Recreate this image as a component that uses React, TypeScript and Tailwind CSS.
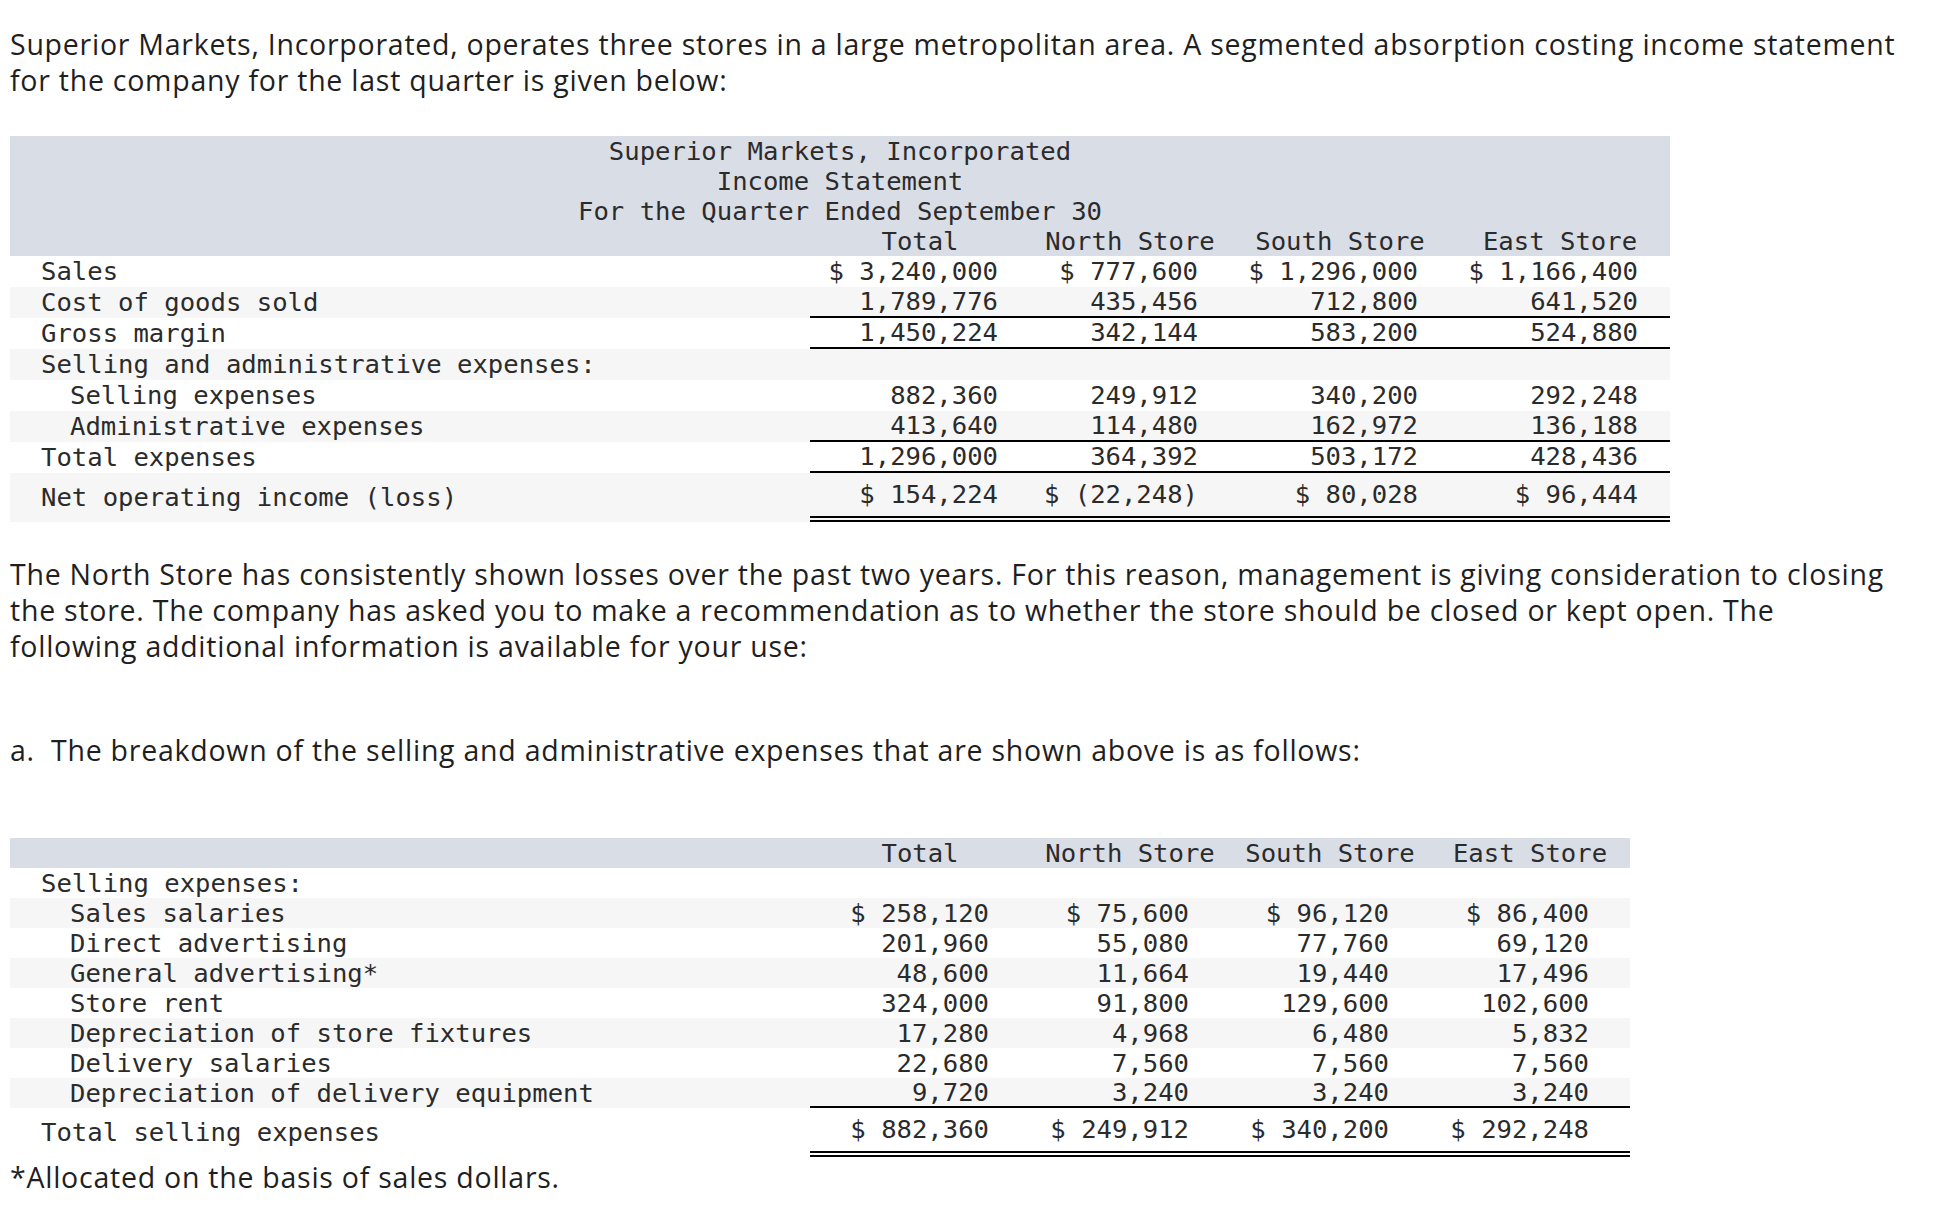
import { FunctionComponent } from 'react'

interface Row {
  label: string
  indent?: boolean
  vals: string[]
  line?: boolean
}

const topRows: Row[] = [
  { label: 'Sales', vals: ['$ 3,240,000', '$ 777,600', '$ 1,296,000', '$ 1,166,400'] },
  { label: 'Cost of goods sold', vals: ['1,789,776', '435,456', '712,800', '641,520'], line: true },
  { label: 'Gross margin', vals: ['1,450,224', '342,144', '583,200', '524,880'], line: true },
  { label: 'Selling and administrative expenses:', vals: ['', '', '', ''] },
  { label: 'Selling expenses', indent: true, vals: ['882,360', '249,912', '340,200', '292,248'] },
  { label: 'Administrative expenses', indent: true, vals: ['413,640', '114,480', '162,972', '136,188'], line: true },
  { label: 'Total expenses', vals: ['1,296,000', '364,392', '503,172', '428,436'], line: true },
]

const sellingRows: Row[] = [
  { label: 'Selling expenses:', vals: ['', '', '', ''] },
  { label: 'Sales salaries', indent: true, vals: ['$ 258,120', '$ 75,600', '$ 96,120', '$ 86,400'] },
  { label: 'Direct advertising', indent: true, vals: ['201,960', '55,080', '77,760', '69,120'] },
  { label: 'General advertising*', indent: true, vals: ['48,600', '11,664', '19,440', '17,496'] },
  { label: 'Store rent', indent: true, vals: ['324,000', '91,800', '129,600', '102,600'] },
  { label: 'Depreciation of store fixtures', indent: true, vals: ['17,280', '4,968', '6,480', '5,832'] },
  { label: 'Delivery salaries', indent: true, vals: ['22,680', '7,560', '7,560', '7,560'] },
  { label: 'Depreciation of delivery equipment', indent: true, vals: ['9,720', '3,240', '3,240', '3,240'], line: true },
]

const headers = ['Total', 'North Store', 'South Store', 'East Store']

// column widths for the two statements
const topCols = ['w-[220px]', 'w-[200px]', 'w-[220px]', 'w-[220px]']
const sellCols = ['w-[220px]', 'w-[200px]', 'w-[200px]', 'w-[200px]']

const mono = "font-['DejaVu_Sans_Mono',monospace] text-[25.6px] text-[#2b2b2b]"
const body = "font-['Open_Sans',sans-serif] text-[28.5px] leading-[36px] tracking-[0.75px]"

const DataRow: FunctionComponent<{ row: Row; cols: string[]; pad: string; striped: boolean; h: string }> = ({ row, cols, pad, striped, h }) => (
  <div className={`flex ${h} ${striped ? 'bg-[#f6f6f6]' : ''}`}>
    <div className={`w-[800px] flex items-center whitespace-pre ${row.indent ? 'pl-[60px]' : 'pl-[31px]'}`}>{row.label}</div>
    {row.vals.map((v, i) => (
      <div
        key={i}
        className={`${cols[i]} ${pad} flex items-center justify-end whitespace-pre ${row.line ? 'border-b-2 border-black' : ''}`}
      >
        {v}
      </div>
    ))}
  </div>
)

const TotalRow: FunctionComponent<{ label: string; vals: string[]; cols: string[]; pad: string; striped: boolean }> = ({ label, vals, cols, pad, striped }) => (
  <div className={`flex h-[49px] ${striped ? 'bg-[#f6f6f6]' : ''}`}>
    <div className="w-[800px] flex items-center pl-[31px] whitespace-pre">{label}</div>
    {vals.map((v, i) => (
      <div key={i} className={`${cols[i]} ${pad} flex items-center justify-end whitespace-pre border-b-[6px] border-double border-black`}>
        {v}
      </div>
    ))}
  </div>
)

export default function App() {
  return (
    <div className="min-h-screen bg-white px-[10px] text-[#1f1f1f]">
      <p className={`pt-[26px] w-[1890px] ${body}`}>
        Superior Markets, Incorporated, operates three stores in a large metropolitan area. A segmented absorption costing income statement for the company for the last quarter is given below:
      </p>

      <div className={`mt-[38px] w-[1660px] ${mono}`}>
        <div className="bg-[#d9dde6] leading-[30px]">
          <div className="text-center">Superior Markets, Incorporated</div>
          <div className="text-center">Income Statement</div>
          <div className="text-center">For the Quarter Ended September 30</div>
          <div className="flex">
            <div className="w-[800px]" />
            {headers.map((t, i) => (
              <div key={t} className={`${topCols[i]} text-center whitespace-pre`}>{t}</div>
            ))}
          </div>
        </div>
        {topRows.map((r, i) => (
          <DataRow key={r.label} row={r} cols={topCols} pad="pr-[32px]" striped={i % 2 === 1} h="h-[31px]" />
        ))}
        <TotalRow
          label="Net operating income (loss)"
          vals={['$ 154,224', '$ (22,248)', '$ 80,028', '$ 96,444']}
          cols={topCols}
          pad="pr-[32px]"
          striped
        />
      </div>

      <p className={`mt-[34px] w-[1890px] ${body}`}>
        The North Store has consistently shown losses over the past two years. For this reason, management is giving consideration to closing the store. The company has asked you to make a recommendation as to whether the store should be closed or kept open. The following additional information is available for your use:
      </p>

      <p className={`mt-[68px] flex ${body}`}>
        <span className="w-[41px] shrink-0">a.</span>
        <span>The breakdown of the selling and administrative expenses that are shown above is as follows:</span>
      </p>

      <div className={`mt-[70px] w-[1620px] ${mono}`}>
        <div className="flex h-[30px] items-center bg-[#d9dde6]">
          <div className="w-[800px]" />
          {headers.map((t, i) => (
            <div key={t} className={`${sellCols[i]} text-center whitespace-pre`}>{t}</div>
          ))}
        </div>
        {sellingRows.map((r, i) => (
          <DataRow key={r.label} row={r} cols={sellCols} pad="pr-[41px]" striped={i % 2 === 1} h="h-[30px]" />
        ))}
        <TotalRow
          label="Total selling expenses"
          vals={['$ 882,360', '$ 249,912', '$ 340,200', '$ 292,248']}
          cols={sellCols}
          pad="pr-[41px]"
          striped={false}
        />
      </div>

      <p className={`pt-[2px] ${body} leading-[30px]`}>*Allocated on the basis of sales dollars.</p>
    </div>
  )
}
